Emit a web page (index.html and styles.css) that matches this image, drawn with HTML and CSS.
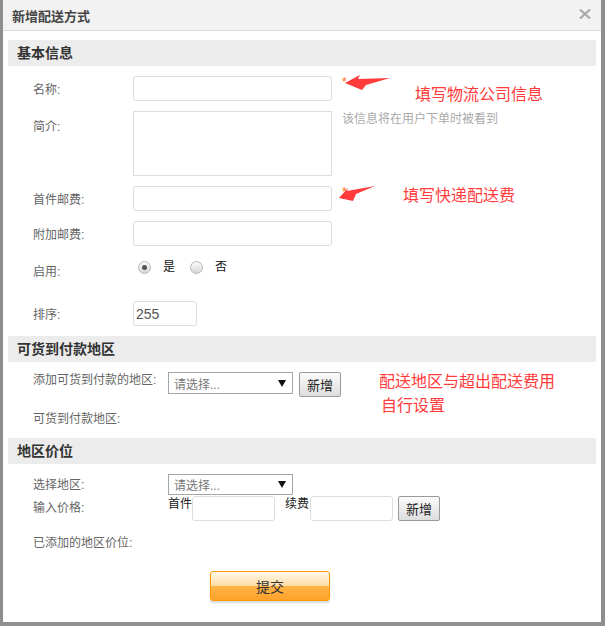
FILE: index.html
```html
<!DOCTYPE html>
<html lang="zh-CN">
<head>
  <meta charset="UTF-8">
  <title>新增配送方式</title>
  <link rel="stylesheet" href="styles.css">
</head>
<body>
  <div class="dialog">
    <div class="dlg-head">
      <span class="dlg-title">新增配送方式</span>
      <span class="dlg-close">
        <svg width="12" height="10" viewBox="0 0 12 10"><path d="M1 0.5 L11 9.5 M11 0.5 L1 9.5" stroke="#a8a8a8" stroke-width="2.2"/></svg>
      </span>
    </div>

    <div class="dlg-body">
      <div class="sec-title">基本信息</div>

      <div class="row r1">
        <label class="lbl">名称:</label>
        <input class="txt" type="text">
        <span class="req">*</span>
      </div>
      <div class="row r2">
        <label class="lbl lbl-top">简介:</label>
        <textarea class="area"></textarea>
        <span class="hint">该信息将在用户下单时被看到</span>
      </div>
      <div class="row r3">
        <label class="lbl">首件邮费:</label>
        <input class="txt" type="text">
        <span class="req">*</span>
      </div>
      <div class="row r4">
        <label class="lbl">附加邮费:</label>
        <input class="txt" type="text">
      </div>
      <div class="row r5">
        <label class="lbl">启用:</label>
        <div class="radios">
          <span class="radio on"></span><span class="opt">是</span>
          <span class="radio"></span><span class="opt">否</span>
        </div>
      </div>
      <div class="row r6">
        <label class="lbl">排序:</label>
        <input class="txt short" type="text" value="255">
      </div>

      <div class="sec-title">可货到付款地区</div>
      <div class="row wide r7">
        <label class="lbl">添加可货到付款的地区:</label>
        <div class="sel">请选择...<svg width="8" height="7" viewBox="0 0 8 7"><path d="M0 0 H8 L4 7 Z" fill="#111"/></svg></div>
        <button class="btn">新增</button>
      </div>
      <div class="row wide r8">
        <label class="lbl">可货到付款地区:</label>
      </div>

      <div class="sec-title">地区价位</div>
      <div class="row wide r9">
        <label class="lbl">选择地区:</label>
        <div class="sel">请选择...<svg width="8" height="7" viewBox="0 0 8 7"><path d="M0 0 H8 L4 7 Z" fill="#111"/></svg></div>
      </div>
      <div class="row wide r10">
        <label class="lbl">输入价格:</label>
        <span class="pfx">首件</span>
        <input class="txt price" type="text">
        <span class="pfx pfx2">续费</span>
        <input class="txt price" type="text">
        <button class="btn">新增</button>
      </div>
      <div class="row wide r11">
        <label class="lbl">已添加的地区价位:</label>
      </div>

      <div class="actions">
        <button class="submit">提交</button>
      </div>
    </div>

    <!-- annotations -->
    <svg class="arrow a1" width="56" height="24" viewBox="0 0 56 24"><polygon points="5,13 20,5 18,9 50,8 26,15 22,20" fill="#ff3b3b"/></svg>
    <svg class="arrow a2" width="44" height="22" viewBox="0 0 44 22"><polygon points="4,15 13,5 12,8 40,3 21,11 18,18" fill="#ff3b3b"/></svg>
    <div class="note n1">填写物流公司信息</div>
    <div class="note n2">填写快递配送费</div>
    <div class="note n3">配送地区与超出配送费用</div>
    <div class="note n4">自行设置</div>
  </div>
</body>
</html>
```

FILE: styles.css
```css
body {
  margin: 0;
  background: #8e8e8e;
  font-family: "Liberation Sans", "Noto Sans CJK SC", sans-serif;
  font-size: 12px;
  color: #666;
}
.dialog {
  position: relative;
  margin-left: 3px;
  width: 598px;
  height: 622px;
  background: #fff;
}
.dlg-head {
  display: flex;
  align-items: center;
  justify-content: space-between;
  height: 30px;
  padding: 0 10px 0 9px;
  background: #f2f2f2;
  border-bottom: 1px solid #dcdcdc;
}
.dlg-title {
  font-size: 13px;
  font-weight: bold;
  color: #444;
}
.dlg-close {
  display: flex;
  margin-top: -3px;
}
.dlg-body {
  padding: 9px 5px 0 5px;
}
.sec-title {
  height: 26px;
  line-height: 26px;
  padding-left: 9px;
  background: #ececec;
  font-size: 14px;
  font-weight: bold;
  color: #333;
}
.row {
  display: flex;
  align-items: center;
  margin-top: 10px;
  padding-left: 25px;
}
.lbl {
  width: 100px;
  flex-shrink: 0;
  line-height: 16px;
  padding-top: 3px;
  color: #666;
}
.wide .lbl {
  width: 135px;
  padding-top: 0;
}
.lbl-top {
  align-self: flex-start;
  padding-top: 8px;
}
.txt {
  box-sizing: border-box;
  width: 199px;
  height: 25px;
  border: 1px solid #ddd;
  border-radius: 3px;
  padding: 0 2px;
  font-family: "Liberation Sans", sans-serif;
  font-size: 14px;
  color: #555;
  outline: none;
}
.txt.short {
  width: 64px;
}
.txt.price {
  width: 83px;
}
.area {
  box-sizing: border-box;
  width: 199px;
  height: 65px;
  border: 1px solid #ddd;
  border-radius: 0;
  resize: none;
  outline: none;
}
.req {
  align-self: flex-start;
  margin-left: 10px;
  color: #f60;
  font-size: 12px;
  line-height: 12px;
}
.hint {
  align-self: flex-start;
  margin-left: 10px;
  margin-top: 1px;
  color: #aaa;
  line-height: 14px;
}
.r5 { height: 28px; }
.r6 { margin-top: 17px; }
.r6 + .sec-title { margin-top: 10px; }
.radios {
  display: flex;
  align-items: center;
  align-self: flex-start;
  margin-top: 4px;
  padding-left: 5px;
}
.radio {
  box-sizing: border-box;
  position: relative;
  width: 13px;
  height: 13px;
  border: 1px solid #b8b8b8;
  border-radius: 50%;
  background: linear-gradient(#fafafa, #d8d8d8);
}
.radio.on::after {
  content: "";
  position: absolute;
  left: 3px;
  top: 3px;
  width: 5px;
  height: 5px;
  border-radius: 50%;
  background: #555;
}
.opt {
  margin: -3px 15px 0 12px;
  color: #111;
  font-size: 12px;
}
.sel {
  box-sizing: border-box;
  display: flex;
  align-items: center;
  justify-content: space-between;
  width: 125px;
  height: 22px;
  padding: 0 6px 0 5px;
  border: 1px solid #a6a6a6;
  color: #777;
  font-size: 12px;
}
.btn {
  box-sizing: border-box;
  width: 42px;
  height: 25px;
  margin-left: 6px;
  padding: 0;
  border: 1px solid #9a9a9a;
  border-radius: 2px;
  background: linear-gradient(#fbfbfb, #dedede);
  font-family: "Noto Sans CJK SC", sans-serif;
  font-size: 13px;
  color: #222;
}
.r7 { align-items: flex-start; }
.r8 { margin-top: 14px; }
.r8 + .sec-title { margin-top: 11px; }
.r9 .sel { height: 21px; }
.r10 {
  margin-top: 1px;
  align-items: flex-start;
}
.r10 .lbl { padding-top: 4px; }
.r10 .btn { margin-left: 5px; }
.pfx {
  color: #222;
  line-height: 16px;
}
.pfx2 { margin-left: 10px; margin-right: 1px; }
.r11 { margin-top: 14px; }
.actions {
  margin-top: 20px;
  padding-left: 202px;
}
.submit {
  box-sizing: border-box;
  width: 120px;
  height: 30px;
  border: 1px solid #ff9a00;
  border-radius: 3px;
  background: linear-gradient(#fff8ea 0%, #ffdca4 50%, #ffb448 51%, #ffa22a 100%);
  box-shadow: 0 2px 2px #d8d8d8;
  font-family: "Noto Sans CJK SC", sans-serif;
  font-size: 14px;
  color: #333;
}
.arrow {
  position: absolute;
}
.a1 { left: 337px; top: 70px; }
.a2 { left: 332px; top: 183px; }
.note {
  position: absolute;
  font-family: "Noto Sans CJK SC", sans-serif;
  font-size: 16px;
  line-height: 16px;
  color: #ff3b3b;
}
.n1 { left: 412px; top: 85px; }
.n2 { left: 400px; top: 186px; }
.n3 { left: 376px; top: 372px; }
.n4 { left: 378px; top: 396px; }
```
